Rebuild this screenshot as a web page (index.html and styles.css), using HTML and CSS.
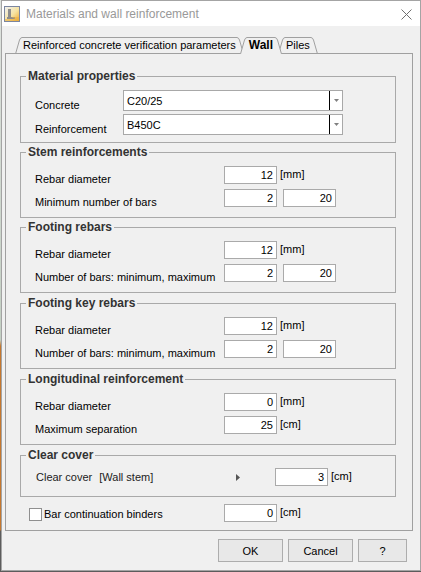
FILE: index.html
```html
<!DOCTYPE html>
<html lang="en">
<head>
<meta charset="utf-8">
<title>Materials and wall reinforcement</title>
<link rel="stylesheet" href="styles.css">
</head>
<body>
<div class="window">
  <div class="titlebar">
    <svg class="app-icon" viewBox="0 0 16 16">
      <defs>
        <linearGradient id="sky" x1="0" y1="0" x2="1" y2="1">
          <stop offset="0" stop-color="#eef1f7"/>
          <stop offset="0.55" stop-color="#f6e3a0"/>
          <stop offset="1" stop-color="#eea72a"/>
        </linearGradient>
      </defs>
      <rect x="0.5" y="0.5" width="15" height="15" fill="url(#sky)" stroke="#7b86a0"/>
      <path d="M4 3 H7 V11 H11 V13 H3 V11 H4 Z" fill="#8d8d8d"/>
      <path d="M7 11 H15 V15 H1 V13 H11 Z" fill="#e9b045" opacity="0.6"/>
    </svg>
    <span class="title">Materials and wall reinforcement</span>
    <svg class="close" viewBox="0 0 11 11">
      <path d="M0.5 0.5 L10.5 10.5 M10.5 0.5 L0.5 10.5" stroke="#707070" stroke-width="1" fill="none"/>
    </svg>
  </div>

  <div class="client">
    <div class="tabs">
      <div class="tab">
        <svg class="tab-edge" viewBox="0 0 7 17"><path class="edge-fill" d="M0 17 L4.5 3 Q5.5 0.5 7 0.5 V17 Z"/><path class="edge-line" d="M0.5 17 L4.5 3 Q5.5 0.5 7 0.5"/></svg>
        <span class="tab-label">Reinforced concrete verification parameters</span>
        <svg class="tab-edge" viewBox="0 0 7 17"><path class="edge-fill" d="M7 17 L2.5 3 Q1.5 0.5 0 0.5 V17 Z"/><path class="edge-line" d="M6.5 17 L2.5 3 Q1.5 0.5 0 0.5"/></svg>
      </div>
      <div class="tab tab-active">
        <svg class="tab-edge" viewBox="0 0 7 17"><path class="edge-fill" d="M0 17 L4.5 3 Q5.5 0.5 7 0.5 V17 Z"/><path class="edge-line" d="M0.5 17 L4.5 3 Q5.5 0.5 7 0.5"/></svg>
        <span class="tab-label">Wall</span>
        <svg class="tab-edge" viewBox="0 0 7 17"><path class="edge-fill" d="M7 17 L2.5 3 Q1.5 0.5 0 0.5 V17 Z"/><path class="edge-line" d="M6.5 17 L2.5 3 Q1.5 0.5 0 0.5"/></svg>
      </div>
      <div class="tab">
        <svg class="tab-edge" viewBox="0 0 7 17"><path class="edge-fill" d="M0 17 L4.5 3 Q5.5 0.5 7 0.5 V17 Z"/><path class="edge-line" d="M0.5 17 L4.5 3 Q5.5 0.5 7 0.5"/></svg>
        <span class="tab-label">Piles</span>
        <svg class="tab-edge" viewBox="0 0 7 17"><path class="edge-fill" d="M7 17 L2.5 3 Q1.5 0.5 0 0.5 V17 Z"/><path class="edge-line" d="M6.5 17 L2.5 3 Q1.5 0.5 0 0.5"/></svg>
      </div>
    </div>

    <div class="panel">
      <fieldset class="group group-materials">
        <legend>Material properties</legend>
        <div class="row row-combo">
          <span class="label label-combo">Concrete</span>
          <div class="combo"><span class="combo-text">C20/25</span><span class="combo-btn"><svg viewBox="0 0 5 3"><path d="M0 0 H5 L2.5 3 Z" fill="#808080"/></svg></span></div>
        </div>
        <div class="row row-combo">
          <span class="label label-combo">Reinforcement</span>
          <div class="combo"><span class="combo-text">B450C</span><span class="combo-btn"><svg viewBox="0 0 5 3"><path d="M0 0 H5 L2.5 3 Z" fill="#808080"/></svg></span></div>
        </div>
      </fieldset>

      <fieldset class="group">
        <legend>Stem reinforcements</legend>
        <div class="row">
          <span class="label">Rebar diameter</span>
          <span class="field">12</span><span class="unit">[mm]</span>
        </div>
        <div class="row">
          <span class="label">Minimum number of bars</span>
          <span class="field">2</span><span class="field field-second">20</span>
        </div>
      </fieldset>

      <fieldset class="group group-spaced">
        <legend>Footing rebars</legend>
        <div class="row">
          <span class="label">Rebar diameter</span>
          <span class="field">12</span><span class="unit">[mm]</span>
        </div>
        <div class="row">
          <span class="label">Number of bars: minimum, maximum</span>
          <span class="field">2</span><span class="field field-second">20</span>
        </div>
      </fieldset>

      <fieldset class="group group-spaced">
        <legend>Footing key rebars</legend>
        <div class="row">
          <span class="label">Rebar diameter</span>
          <span class="field">12</span><span class="unit">[mm]</span>
        </div>
        <div class="row">
          <span class="label">Number of bars: minimum, maximum</span>
          <span class="field">2</span><span class="field field-second">20</span>
        </div>
      </fieldset>

      <fieldset class="group group-spaced">
        <legend>Longitudinal reinforcement</legend>
        <div class="row">
          <span class="label">Rebar diameter</span>
          <span class="field">0</span><span class="unit">[mm]</span>
        </div>
        <div class="row">
          <span class="label">Maximum separation</span>
          <span class="field">25</span><span class="unit">[cm]</span>
        </div>
      </fieldset>

      <fieldset class="group group-cover">
        <legend>Clear cover</legend>
        <div class="row">
          <span class="label label-cover"><span>Clear cover</span><span class="cover-part">[Wall stem]</span></span>
          <svg class="row-arrow" viewBox="0 0 4 7"><path d="M0 0 L4 3.5 L0 7 Z" fill="#555"/></svg>
          <span class="field">3</span><span class="unit">[cm]</span>
        </div>
      </fieldset>

      <div class="row row-check">
        <span class="check-label"><span class="checkbox"></span>Bar continuation binders</span>
        <span class="field">0</span><span class="unit">[cm]</span>
      </div>
    </div>

    <div class="buttons">
      <button class="btn btn-ok" type="button">OK</button>
      <button class="btn btn-cancel" type="button">Cancel</button>
      <button class="btn btn-help" type="button">?</button>
    </div>
  </div>
</div>
</body>
</html>
```

FILE: styles.css
```css
* {
  box-sizing: border-box;
}

html,
body {
  margin: 0;
  padding: 0;
}

/* desktop behind the dialog: only a thin strip shows on the left and below */
body {
  width: 421px;
  height: 572px;
  overflow: hidden;
  background: linear-gradient(to bottom, #dfe3df 0, #c3d0c3 340px, #c4772e 346px, #c4772e 530px, #5c5c5c 531px);
  font-family: "Liberation Sans", Arial, sans-serif;
  font-size: 11px;
  color: #000;
}

.window {
  margin-left: 1px;
  width: 420px;
  height: 571px;
  border: 1px solid #a4a4a4;
  background: #f0f0f0;
  display: flex;
  flex-direction: column;
}

/* ---------- title bar ---------- */
.titlebar {
  flex: none;
  height: 25px;
  background: #fff;
  display: flex;
  align-items: center;
  padding: 0 8px 0 2px;
}

.app-icon {
  width: 16px;
  height: 16px;
  flex: none;
  margin-top: 1px;
}

.title {
  flex: 1;
  margin-left: 6px;
  font-size: 12px;
  color: #999;
  white-space: nowrap;
}

.close {
  width: 11px;
  height: 11px;
  flex: none;
  margin-top: 2px;
}

/* ---------- client area ---------- */
.client {
  flex: 1;
  display: flex;
  flex-direction: column;
  padding-left: 3px;
}

/* ---------- tab strip ---------- */
.tabs {
  flex: none;
  height: 28px;
  margin-bottom: -1px;
  display: flex;
  align-items: flex-end;
  padding-left: 10px;
}

.tab {
  display: flex;
  height: 17px;
  z-index: 0;
}

.tab + .tab {
  margin-left: -4px;
}

.tab-active {
  z-index: 2;
}

.tab-edge {
  width: 7px;
  height: 17px;
  flex: none;
  display: block;
}

.edge-fill {
  fill: #f0f0f0;
}

.edge-line {
  fill: none;
  stroke: #a0a0a0;
  stroke-width: 1;
}

.tab-label {
  height: 17px;
  line-height: 15px;
  border-top: 1px solid #a0a0a0;
  background: #f0f0f0;
  padding: 0 1px;
  white-space: nowrap;
}

.tab-active .tab-label {
  font-weight: bold;
  font-size: 12px;
  padding: 0 2px;
}

/* ---------- tab page ---------- */
.panel {
  position: relative;
  z-index: 1;
  flex: none;
  width: 408px;
  height: 478px;
  border: 1px solid #a0a0a0;
  background: #f0f0f0;
  padding: 15px 16px 0 14px;
}

.group {
  margin: 0 0 2px 0;
  min-width: 0;
  width: 376px;
  border: 1px solid #a9a9a9;
  padding: 6px 10px 10px 14px;
}

.group-spaced {
  margin-bottom: 3px;
}

.group legend {
  margin-left: -9px;
  padding: 0 2px;
  font-size: 12px;
  line-height: 15px;
  font-weight: bold;
  color: #333;
}

.group-materials {
  padding-bottom: 7px;
}

.row {
  display: flex;
  align-items: flex-start;
  height: 18px;
  margin-bottom: 5px;
}

.row:last-child {
  margin-bottom: 0;
}

.label {
  width: 189px;
  flex: none;
  line-height: 14px;
  padding-top: 6px;
  white-space: nowrap;
}

/* ---------- combo boxes ---------- */
.row-combo {
  height: 21px;
  margin-bottom: 3px;
}

.label-combo {
  width: 88px;
  padding-top: 8px;
}

.combo {
  width: 220px;
  height: 21px;
  border: 1px solid #a8a8a8;
  background: #fff;
  display: flex;
}

.combo-text {
  flex: 1;
  line-height: 19px;
  padding: 1px 0 0 3px;
}

.combo-btn {
  width: 13px;
  flex: none;
  border-left: 1px solid #000;
  display: flex;
  align-items: center;
  justify-content: center;
}

.combo-btn svg {
  width: 5px;
  height: 3px;
  display: block;
}

/* ---------- edit fields ---------- */
.field {
  width: 53px;
  height: 18px;
  flex: none;
  border: 1px solid #aaaaaa;
  background: #fff;
  text-align: right;
  line-height: 14px;
  padding: 1px 3px 0 0;
}

.field-second {
  margin-left: 6px;
}

.unit {
  margin-left: 3px;
  line-height: 14px;
  padding-top: 1px;
}

/* ---------- clear cover ---------- */
.group-cover {
  padding-top: 5px;
  margin-bottom: 0;
}

.label-cover {
  width: 201px;
  padding-top: 2px;
  padding-left: 1px;
  color: #222;
}

.cover-part {
  margin-left: 7px;
}

.row-arrow {
  width: 4px;
  height: 7px;
  flex: none;
  margin-top: 6px;
  margin-right: 35px;
}

/* ---------- checkbox row ---------- */
.row-check {
  margin-top: 7px;
}

.check-label {
  width: 204px;
  flex: none;
  display: flex;
  align-items: center;
  padding-left: 9px;
  margin-top: 3px;
  height: 14px;
  white-space: nowrap;
}

.checkbox {
  width: 13px;
  height: 13px;
  flex: none;
  border: 1px solid #8f8f8f;
  background: #fff;
  margin-right: 2px;
}

/* ---------- dialog buttons ---------- */
.buttons {
  width: 408px;
  display: flex;
  justify-content: flex-end;
  gap: 5px;
  padding: 8px 6px 0 0;
}

.btn {
  height: 23px;
  border: 1px solid #adadad;
  background: #e8e8e8;
  font-family: "Liberation Sans", Arial, sans-serif;
  font-size: 11px;
  color: #000;
  padding: 0;
  margin: 0;
}

.btn-ok,
.btn-cancel {
  width: 65px;
}

.btn-help {
  width: 49px;
}
```
